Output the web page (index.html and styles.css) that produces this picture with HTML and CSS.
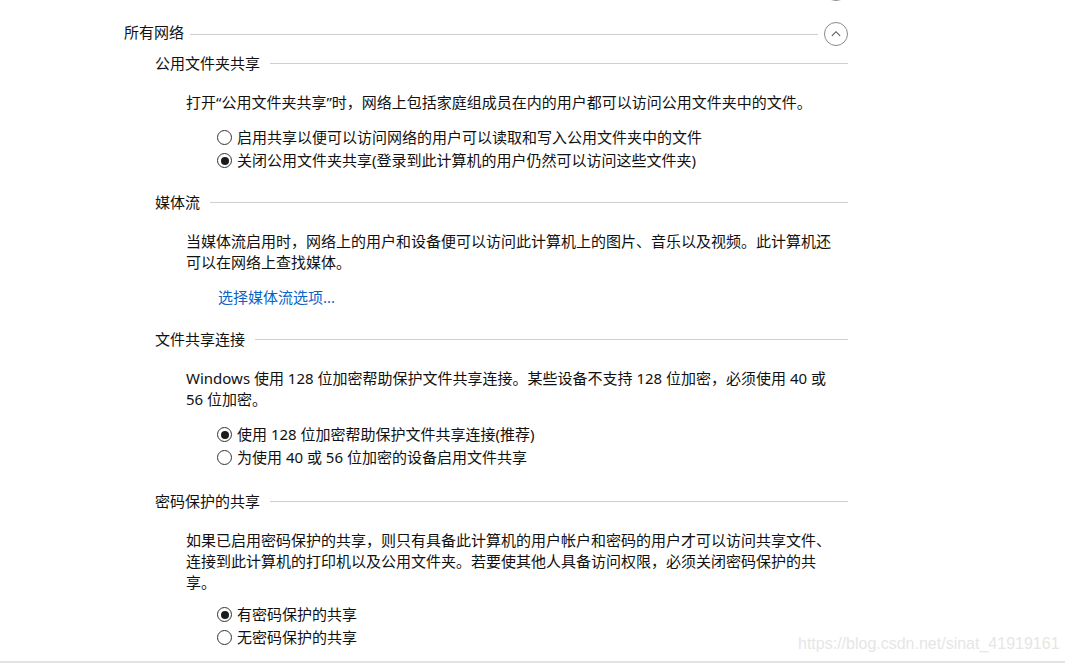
FILE: index.html
```html
<!DOCTYPE html>
<html lang="zh-CN">
<head>
<meta charset="utf-8">
<title>高级共享设置</title>
<link rel="stylesheet" href="styles.css">
</head>
<body>
<div class="page">
  <div class="content">
    <div class="prev-group">
      <span class="collapse-btn"></span>
    </div>

    <div class="group">
      <div class="group-header">
        <span class="group-title">所有网络</span>
        <span class="rule main-rule"></span>
        <span class="collapse-btn">
          <svg viewBox="0 0 24 24" width="24" height="24"><path d="M7.5 14 L12 9.5 L16.5 14" fill="none" stroke="#555" stroke-width="1.2"/></svg>
        </span>
      </div>

      <div class="section first">
        <div class="section-header"><span class="section-title">公用文件夹共享</span><span class="rule"></span></div>
        <p class="desc">打开“公用文件夹共享”时，网络上包括家庭组成员在内的用户都可以访问公用文件夹中的文件。</p>
        <div class="options">
          <label class="option"><span class="radio"></span>启用共享以便可以访问网络的用户可以读取和写入公用文件夹中的文件</label>
          <label class="option"><span class="radio checked"></span>关闭公用文件夹共享(登录到此计算机的用户仍然可以访问这些文件夹)</label>
        </div>
      </div>

      <div class="section">
        <div class="section-header"><span class="section-title">媒体流</span><span class="rule"></span></div>
        <p class="desc">当媒体流启用时，网络上的用户和设备便可以访问此计算机上的图片、音乐以及视频。此计算机还可以在网络上查找媒体。</p>
        <div class="options link-row"><a class="link" href="#">选择媒体流选项...</a></div>
      </div>

      <div class="section">
        <div class="section-header"><span class="section-title">文件共享连接</span><span class="rule"></span></div>
        <p class="desc">Windows 使用 128 位加密帮助保护文件共享连接。某些设备不支持 128 位加密，必须使用 40 或 56 位加密。</p>
        <div class="options">
          <label class="option"><span class="radio checked"></span>使用 128 位加密帮助保护文件共享连接(推荐)</label>
          <label class="option"><span class="radio"></span>为使用 40 或 56 位加密的设备启用文件共享</label>
        </div>
      </div>

      <div class="section last">
        <div class="section-header"><span class="section-title">密码保护的共享</span><span class="rule"></span></div>
        <p class="desc">如果已启用密码保护的共享，则只有具备此计算机的用户帐户和密码的用户才可以访问共享文件、连接到此计算机的打印机以及公用文件夹。若要使其他人具备访问权限，必须关闭密码保护的共享。</p>
        <div class="options">
          <label class="option"><span class="radio checked"></span>有密码保护的共享</label>
          <label class="option"><span class="radio"></span>无密码保护的共享</label>
        </div>
      </div>
    </div>
  </div>
  <div class="watermark">https://blog.csdn.net/sinat_41919161</div>
</div>
</body>
</html>
```

FILE: styles.css
```css
html, body {
  margin: 0;
  padding: 0;
  background: #ffffff;
}
body {
  font-family: "Noto Sans", "Noto Sans CJK SC", sans-serif;
  font-size: 15px;
  color: #111;
  overflow: hidden;
}
.page {
  position: relative;
  height: 663px;
  box-sizing: border-box;
  border-bottom: 2px solid #e3e3e3;
  overflow: hidden;
  display: flow-root;
}
.content {
  padding-left: 124px;
  width: 724px;
}
.prev-group {
  display: flex;
  justify-content: flex-end;
  margin-top: -23px;
  height: 24px;
}
.collapse-btn {
  width: 22px;
  height: 22px;
  border: 1px solid #8a8a8a;
  border-radius: 50%;
  display: flex;
  align-items: center;
  justify-content: center;
  flex: none;
}
.collapse-btn svg {
  display: block;
}
.group {
  margin-top: 21px;
}
.group-header {
  display: flex;
  align-items: center;
  height: 24px;
}
.group-title {
  line-height: 20px;
  margin-top: -5px;
}
.rule {
  flex: 1;
  height: 1px;
  background: #cfcfcf;
}
.main-rule {
  margin: 0 6px 0 6px;
}
.section {
  padding-left: 31px;
  padding-top: 20px;
}
.section.first {
  padding-top: 7px;
}
.section.last {
  padding-top: 22px;
}
.section-header {
  display: flex;
  align-items: center;
  height: 20px;
  line-height: 20px;
}
.section-title {
  margin-right: 10px;
}
.desc {
  margin: 19px 0 0 31px;
  width: 650px;
  line-height: 21px;
}
.options {
  margin: 13px 0 0 62px;
  display: flex;
  flex-direction: column;
}
.section.last .options {
  margin-top: 10px;
}
.option {
  display: flex;
  align-items: center;
  height: 23px;
  line-height: 23px;
}
.radio {
  width: 15px;
  height: 15px;
  box-sizing: border-box;
  border: 1px solid #333;
  border-radius: 50%;
  margin-right: 5px;
  position: relative;
  flex: none;
}
.radio.checked::after {
  content: "";
  position: absolute;
  left: 2.5px;
  top: 2.5px;
  width: 8px;
  height: 8px;
  border-radius: 50%;
  background: #1b1b1b;
}
.link-row {
  margin-top: 13px;
  margin-left: 63px;
  line-height: 23px;
}
.link {
  color: #0a64c8;
  text-decoration: none;
}
.watermark {
  position: absolute;
  left: 798px;
  top: 635px;
  font-family: "Liberation Sans", Arial, sans-serif;
  font-size: 16px;
  color: #e6e6e6;
  white-space: nowrap;
}
```
